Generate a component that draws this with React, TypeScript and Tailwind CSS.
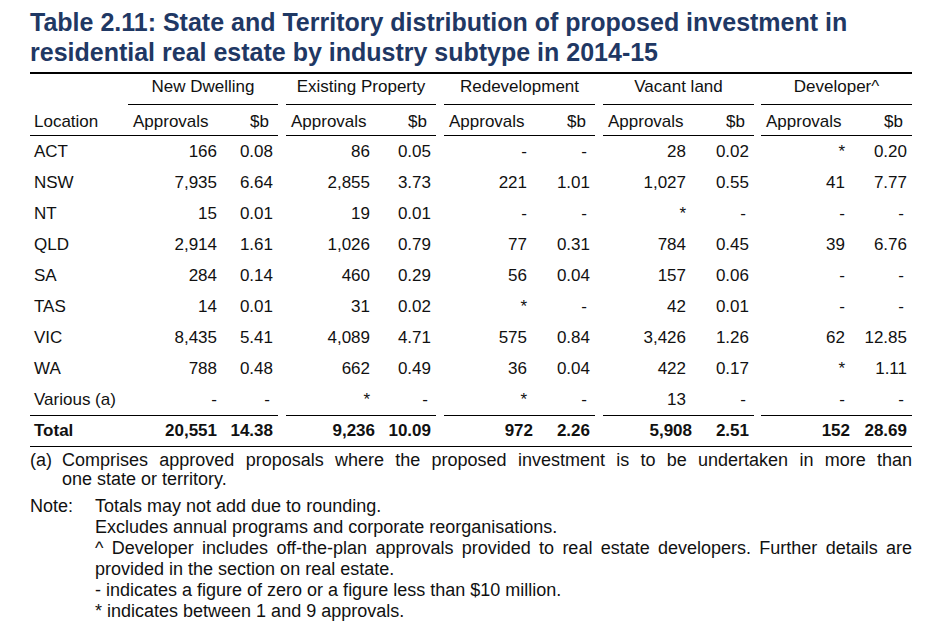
const groups = ["New Dwelling", "Existing Property", "Redevelopment", "Vacant land", "Developer^"];

// group boxes: width + gap before
const groupBox = [
  "w-[150px]",
  "ml-[8px] w-[150px]",
  "ml-[8px] w-[151px]",
  "ml-[8px] w-[151px]",
  "ml-[7px] w-[151px]",
];

// approvals column width within each group (ordinary rows)
const apprW = ["w-[89px]", "w-[84px]", "w-[83px]", "w-[83px]", "w-[84px]"];

type Cell = [string, string];

const rows: [string, Cell[]][] = [
  ["ACT", [["166", "0.08"], ["86", "0.05"], ["-", "-"], ["28", "0.02"], ["*", "0.20"]]],
  ["NSW", [["7,935", "6.64"], ["2,855", "3.73"], ["221", "1.01"], ["1,027", "0.55"], ["41", "7.77"]]],
  ["NT", [["15", "0.01"], ["19", "0.01"], ["-", "-"], ["*", "-"], ["-", "-"]]],
  ["QLD", [["2,914", "1.61"], ["1,026", "0.79"], ["77", "0.31"], ["784", "0.45"], ["39", "6.76"]]],
  ["SA", [["284", "0.14"], ["460", "0.29"], ["56", "0.04"], ["157", "0.06"], ["-", "-"]]],
  ["TAS", [["14", "0.01"], ["31", "0.02"], ["*", "-"], ["42", "0.01"], ["-", "-"]]],
  ["VIC", [["8,435", "5.41"], ["4,089", "4.71"], ["575", "0.84"], ["3,426", "1.26"], ["62", "12.85"]]],
  ["WA", [["788", "0.48"], ["662", "0.49"], ["36", "0.04"], ["422", "0.17"], ["*", "1.11"]]],
  ["Various (a)", [["-", "-"], ["*", "-"], ["*", "-"], ["13", "-"], ["-", "-"]]],
];

const totals: Cell[] = [
  ["20,551", "14.38"],
  ["9,236", "10.09"],
  ["972", "2.26"],
  ["5,908", "2.51"],
  ["152", "28.69"],
];

export default function App() {
  return (
    <div
      className="h-[638px] w-[945px] overflow-hidden bg-white pl-[30px] pt-[7px] text-[#111]"
      style={{ fontFamily: '"Liberation Sans", Arial, sans-serif' }}
    >
      {/* Title */}
      <h1 className="text-[25px] font-bold leading-[30px] text-[#1f3864]">
        Table 2.11: State and Territory distribution of proposed investment in
        <br />
        residential real estate by industry subtype in 2014-15
      </h1>

      <div className="w-[882px] text-[17px]">
        <div className="mt-[5px] h-[2px] bg-black" />

        {/* Group headings */}
        <div className="flex h-[31px]">
          <div className="w-[98px]" />
          {groups.map((g, i) => (
            <div key={g} className={`${groupBox[i]} border-b border-black text-center leading-[26px]`}>
              {g}
            </div>
          ))}
        </div>

        {/* Sub headings */}
        <div className="flex h-[31px]">
          <div className="w-[98px] border-b border-black pl-[4px] pt-[4px] leading-[26px]">Location</div>
          {groups.map((g, i) => (
            <div key={g} className={`${groupBox[i]} flex justify-between border-b border-black pt-[4px] leading-[26px]`}>
              <span className="pl-[5px]">Approvals</span>
              <span className="pr-[9px]">$b</span>
            </div>
          ))}
        </div>

        {/* Body */}
        {rows.map(([loc, cells]) => (
          <div key={loc} className="flex h-[31px] leading-[31px]">
            <div className="w-[98px] pl-[4px]">{loc}</div>
            {cells.map(([a, b], i) => (
              <div key={i} className={`${groupBox[i]} flex`}>
                <div className={`${apprW[i]} text-right`}>{a}</div>
                <div className={`flex-1 text-right ${b === "-" ? "pr-[8px]" : "pr-[5px]"}`}>{b}</div>
              </div>
            ))}
          </div>
        ))}

        {/* Total */}
        <div className="flex h-[31px] font-bold leading-[30px]">
          <div className="w-[98px] border-t border-black pl-[4px]">Total</div>
          {totals.map(([a, b], i) => (
            <div key={i} className={`${groupBox[i]} flex border-t border-black`}>
              <div className="w-[89px] text-right">{a}</div>
              <div className="flex-1 pr-[5px] text-right">{b}</div>
            </div>
          ))}
        </div>
        <div className="h-px bg-black" />

        {/* Footnotes */}
        <div className="mt-[4px] flex text-[18px] leading-[19px]">
          <div className="w-[32px] shrink-0">(a)</div>
          <div className="flex-1">
            <div className="text-justify [text-align-last:justify]">
              Comprises approved proposals where the proposed investment is to be undertaken in more than
            </div>
            <div>one state or territory.</div>
          </div>
        </div>

        <div className="mt-[7px] flex text-[18px] leading-[21px]">
          <div className="w-[65px] shrink-0">Note:</div>
          <div className="flex-1">
            <div>Totals may not add due to rounding.</div>
            <div>Excludes annual programs and corporate reorganisations.</div>
            <div className="text-justify [text-align-last:justify]">
              ^ Developer includes off-the-plan approvals provided to real estate developers. Further details are
            </div>
            <div>provided in the section on real estate.</div>
            <div>- indicates a figure of zero or a figure less than $10 million.</div>
            <div>* indicates between 1 and 9 approvals.</div>
          </div>
        </div>
      </div>
    </div>
  );
}
